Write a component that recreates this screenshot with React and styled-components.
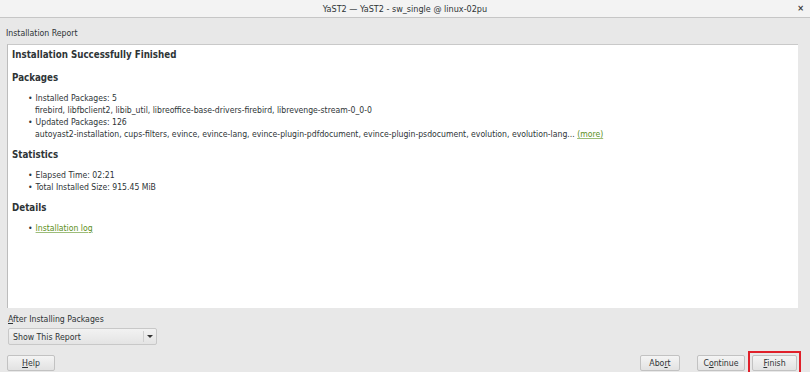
import React from 'react';
import styled, { createGlobalStyle } from 'styled-components';

const Global = createGlobalStyle`
  html, body { margin: 0; padding: 0; }
  body {
    width: 810px;
    height: 372px;
    overflow: hidden;
    background: #e8e8e8;
    font-family: "DejaVu Sans Condensed", "DejaVu Sans", sans-serif;
    color: #2e3436;
  }
`;

const Window = styled.div`
  width: 810px;
  height: 372px;
  display: flex;
  flex-direction: column;
  background: #e8e8e8;
`;

const TitleBar = styled.div`
  height: 17px;
  flex: none;
  background: #f3f3f3;
  border-bottom: 1px solid #c6c6c6;
  display: flex;
  align-items: center;
  justify-content: center;
  position: relative;
  font-size: 9px;
  color: #2e3436;
`;

const Close = styled.span`
  position: absolute;
  right: 6px;
  top: 3px;
  font-size: 9px;
  font-weight: bold;
  color: #3a3a3a;
`;

const Body = styled.div`
  flex: 1;
  display: flex;
  flex-direction: column;
  padding: 0 9px 5px 7px;
`;

const Caption = styled.div`
  font-size: 8.7px;
  margin: 10px 0 6px -1px;
  height: 10px;
`;

const Report = styled.div`
  height: 264px;
  margin-right: 3px;
  background: #fff;
  border-top: 1px solid #c9c9c9;
  border-left: 1px solid #bcbcbc;
  padding: 3px 0 0 4px;
  box-sizing: border-box;
`;

const Title = styled.h1`
  margin: 0 0 9px;
  font-size: 9.7px;
  font-weight: bold;
  line-height: 14px;
`;

const Heading = styled.h2`
  margin: 0 0 7px;
  font-size: 9.7px;
  font-weight: bold;
  line-height: 14px;
`;

const List = styled.ul`
  margin: 0 0 8px;
  padding: 0 0 0 16px;
  list-style: none;
  font-size: 8.6px;
  line-height: 12px;
`;

const Item = styled.li`
  &::before {
    content: "•";
    margin-right: 3px;
  }
`;

const Sub = styled.div`
  padding-left: 7px;
`;

const Link = styled.a`
  color: #5b8f22;
  text-decoration: underline;
  text-decoration-color: #9dbd7a;
`;

const After = styled.div`
  font-size: 8.7px;
  margin: 6px 0 4px 1px;
  line-height: 10px;
`;

const Combo = styled.div`
  width: 149px;
  height: 17px;
  margin-left: 1px;
  box-sizing: border-box;
  border: 1px solid #c8c8c8;
  border-radius: 2px;
  background: linear-gradient(#f2f2f2, #e4e4e4);
  display: flex;
  align-items: center;
  font-size: 8.7px;
  padding-left: 4px;
`;

const ComboText = styled.span`
  flex: 1;
`;

const Arrow = styled.span`
  width: 12px;
  height: 11px;
  border-left: 1px solid #d0d0d0;
  display: flex;
  align-items: center;
  justify-content: center;
  &::after {
    content: "";
    border-left: 3px solid transparent;
    border-right: 3px solid transparent;
    border-top: 3px solid #333;
  }
`;

const Buttons = styled.div`
  display: flex;
  align-items: center;
  margin-top: 6px;
`;

const Spacer = styled.div`
  flex: 1;
`;

const Button = styled.button`
  font-family: inherit;
  font-size: 8.7px;
  color: #2e3436;
  height: 16px;
  width: ${p => p.w || 48}px;
  margin-left: ${p => p.gap || 0}px;
  padding: 0;
  box-sizing: border-box;
  border: 1px solid #c2c2c2;
  border-radius: 2px;
  background: linear-gradient(#f4f4f4, #e2e2e2);
  u { text-decoration: underline; }
`;

const Focus = styled.div`
  margin-left: 3px;
  border: 2px solid #e0202a;
  padding: 2px;
  display: flex;
`;

export default function App() {
  return (
    <>
      <Global />
      <Window>
        <TitleBar>
          YaST2 — YaST2 - sw_single @ linux-02pu
          <Close>×</Close>
        </TitleBar>
        <Body>
          <Caption>Installation Report</Caption>
          <Report>
            <Title>Installation Successfully Finished</Title>
            <Heading>Packages</Heading>
            <List>
              <Item>Installed Packages: 5</Item>
              <Sub>firebird, libfbclient2, libib_util, libreoffice-base-drivers-firebird, librevenge-stream-0_0-0</Sub>
              <Item>Updated Packages: 126</Item>
              <Sub>
                autoyast2-installation, cups-filters, evince, evince-lang, evince-plugin-pdfdocument, evince-plugin-psdocument, evolution, evolution-lang... <Link>(more)</Link>
              </Sub>
            </List>
            <Heading>Statistics</Heading>
            <List>
              <Item>Elapsed Time: 02:21</Item>
              <Item>Total Installed Size: 915.45 MiB</Item>
            </List>
            <Heading>Details</Heading>
            <List>
              <Item><Link>Installation log</Link></Item>
            </List>
          </Report>
          <After><u>A</u>fter Installing Packages</After>
          <Combo>
            <ComboText>Show This Report</ComboText>
            <Arrow />
          </Combo>
          <Buttons>
            <Button w={48}><u>H</u>elp</Button>
            <Spacer />
            <Button w={40}>Abo<u>r</u>t</Button>
            <Button w={48} gap={17}>C<u>o</u>ntinue</Button>
            <Focus>
              <Button w={45}><u>F</u>inish</Button>
            </Focus>
          </Buttons>
        </Body>
      </Window>
    </>
  );
}
